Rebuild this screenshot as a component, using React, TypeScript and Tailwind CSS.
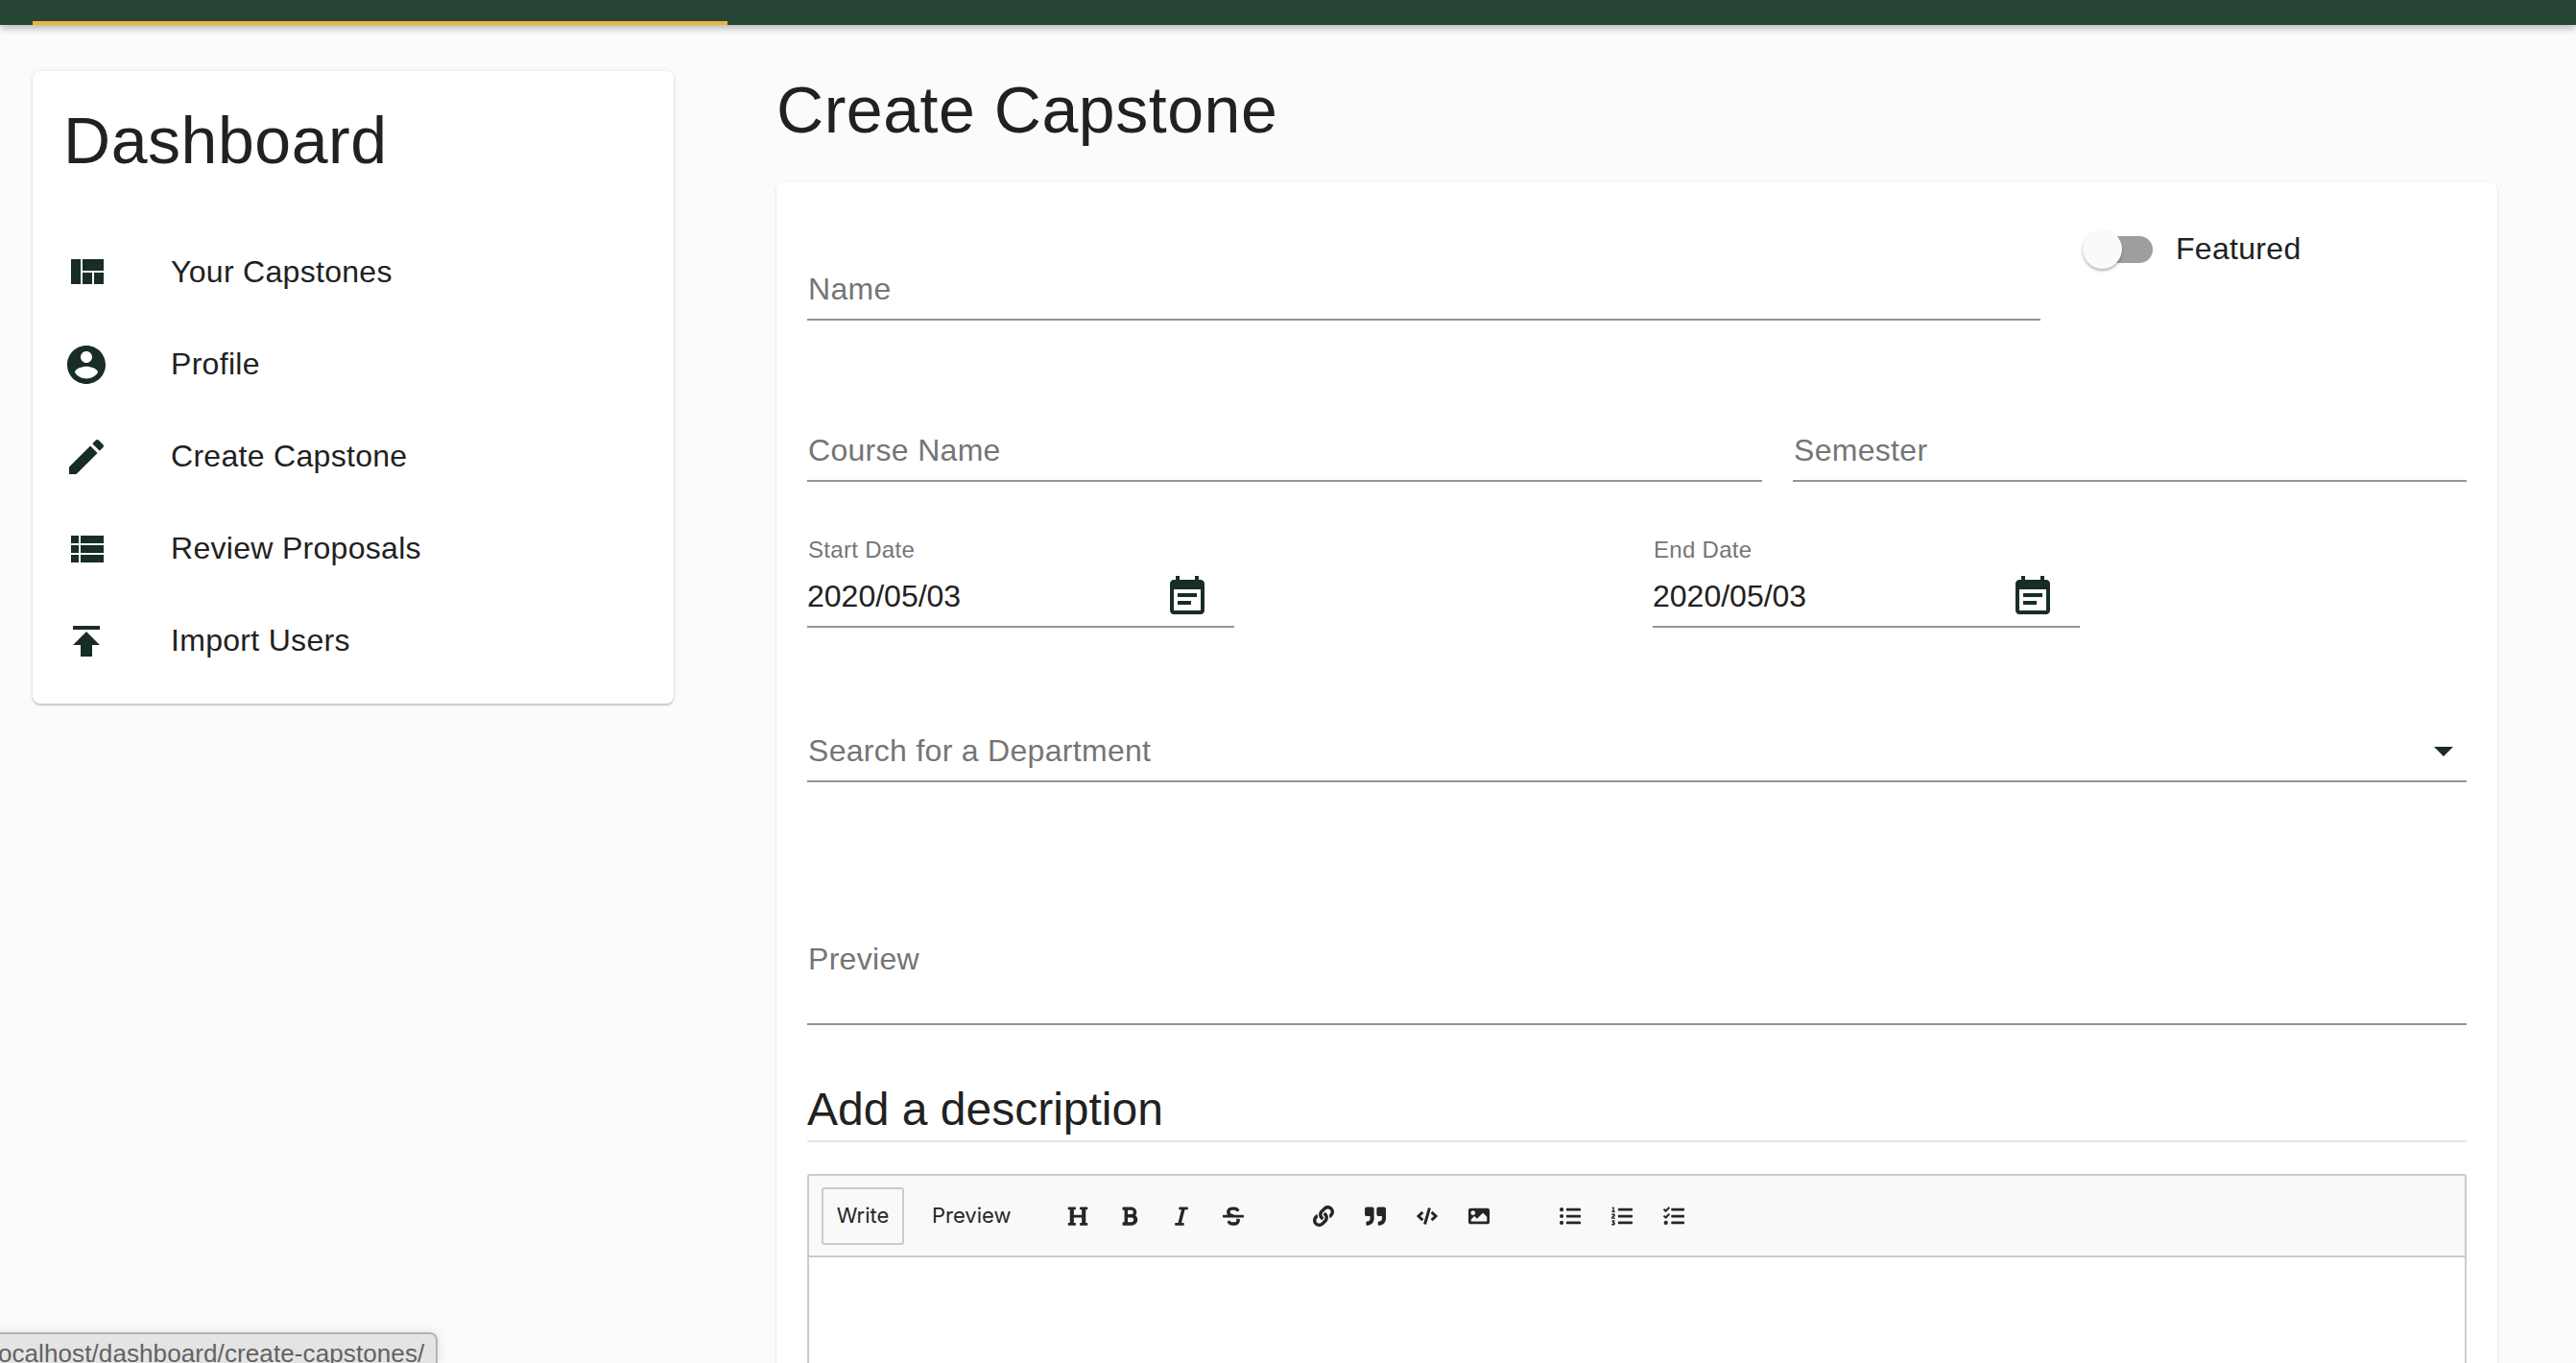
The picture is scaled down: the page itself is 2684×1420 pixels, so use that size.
import type { ReactNode } from "react"
import {
  FaBold,
  FaCode,
  FaHeading,
  FaImage,
  FaItalic,
  FaLink,
  FaListOl,
  FaListUl,
  FaQuoteRight,
  FaStrikethrough,
  FaTasks,
} from "react-icons/fa"

const navItems = [
  { label: "Your Capstones", path: "M10 18h5v-6h-5v6zm-6 0h5V5H4v13zm12 0h5v-6h-5v6zM10 5v6h11V5H10z" },
  {
    label: "Profile",
    path: "M12 2C6.48 2 2 6.48 2 12s4.48 10 10 10 10-4.48 10-10S17.52 2 12 2zm0 3c1.66 0 3 1.34 3 3s-1.34 3-3 3-3-1.34-3-3 1.34-3 3-3zm0 14.2c-2.5 0-4.71-1.28-6-3.22.03-1.99 4-3.08 6-3.08 1.99 0 5.97 1.09 6 3.08-1.29 1.94-3.5 3.22-6 3.22z",
  },
  {
    label: "Create Capstone",
    path: "M3 17.25V21h3.75L17.81 9.94l-3.75-3.75L3 17.25zM20.71 7.04c.39-.39.39-1.02 0-1.41l-2.34-2.34c-.39-.39-1.02-.39-1.41 0l-1.83 1.83 3.75 3.75 1.83-1.83z",
  },
  { label: "Review Proposals", path: "M4 14h4v-4H4v4zm0 5h4v-4H4v4zM4 9h4V5H4v4zm5 5h12v-4H9v4zm0 5h12v-4H9v4zM9 5v4h12V5H9z" },
  { label: "Import Users", path: "M5 4v2h14V4H5zm0 10h4v6h6v-6h4l-7-7-7 7z" },
]

const eventNote =
  "M17 10H7v2h10v-2zm2-7h-1V1h-2v2H8V1H6v2H5c-1.11 0-1.99.9-1.99 2L3 19c0 1.1.89 2 2 2h14c1.1 0 2-.9 2-2V5c0-1.1-.9-2-2-2zm0 16H5V8h14v11zm-5-5H7v2h7v-2z"

function MaterialIcon({ path }: { path: string }) {
  return (
    <svg viewBox="0 0 24 24" className="h-12 w-12 shrink-0 fill-[#182d25]">
      <path d={path} />
    </svg>
  )
}

function Field({ label, className, children }: { label: string; className?: string; children?: ReactNode }) {
  return (
    <div className={`flex h-16 items-end justify-between border-b-2 border-[#949494] pb-[12px] ${className ?? ""}`}>
      <span className="ml-[1px] text-[32px] leading-[38px] tracking-[0.3px] text-[#757575]">{label}</span>
      {children}
    </div>
  )
}

function DateField({ label, value }: { label: string; value: string }) {
  return (
    <div className="flex h-[99px] w-[445px] flex-col border-b-2 border-[#949494]">
      <span className="ml-[1px] text-[24px] leading-[36px] tracking-[0.3px] text-[#757575]">{label}</span>
      <div className="mt-[6px] flex items-center justify-between pr-[25px]">
        <span className="pb-[1px] text-[32px] leading-[48px] text-[#212121]">{value}</span>
        <MaterialIcon path={eventNote} />
      </div>
    </div>
  )
}

const toolGroups = [
  { gap: "ml-0", icons: [FaHeading, FaBold, FaItalic, FaStrikethrough] },
  { gap: "ml-[72px]", icons: [FaLink, FaQuoteRight, FaCode, FaImage] },
  { gap: "ml-[73px]", icons: [FaListUl, FaListOl, FaTasks] },
]

export default function App() {
  return (
    <div className="relative h-[1420px] overflow-hidden bg-[#fbfbfb] font-['Liberation_Sans',Arial,sans-serif] text-[#212121]">
      <header className="h-[26px] bg-[#264535] pl-[34px] shadow-[0_3px_8px_rgba(0,0,0,0.3)]">
        <div className="h-[26px] w-[724px] border-b-4 border-[#eeb33b]" />
      </header>

      <div className="flex items-start pl-[34px]">
        <aside className="mt-[48px] h-[659px] w-[668px] rounded-[8px] bg-white pl-[32px] shadow-[0_2px_2px_rgba(0,0,0,0.18),0_0_4px_rgba(0,0,0,0.1)]">
          <h2 className="pt-[32px] text-[68px] leading-[80px] tracking-[0.55px]">Dashboard</h2>
          <nav className="mt-[50px] flex flex-col">
            {navItems.map((item) => (
              <div key={item.label} className="flex h-[96px] items-center">
                <MaterialIcon path={item.path} />
                <span className="ml-[64px] pb-[2px] text-[32px] leading-[48px] tracking-[0.3px]">{item.label}</span>
              </div>
            ))}
          </nav>
        </aside>

        <main className="ml-[107px] w-[1793px]">
          <h1 className="mt-[48px] text-[68px] leading-[80px] tracking-[0.55px]">Create Capstone</h1>
          <section className="mt-[36px] h-[1300px] rounded-[8px] bg-white px-[32px] shadow-[0_1px_3px_rgba(0,0,0,0.16)]">
            <div className="flex items-start pt-[49px]">
              <Field label="Name" className="mt-[31px] w-[1285px]" />
              <div className="relative ml-[44px] h-[41px] w-[73px]">
                <div className="absolute left-[6px] top-[7px] h-[28px] w-[67px] rounded-full bg-[#9e9e9e]" />
                <div className="absolute left-0 top-0 h-[41px] w-[41px] rounded-full bg-[#fafafa] shadow-[0_2px_3px_rgba(0,0,0,0.3)]" />
              </div>
              <span className="ml-[24px] text-[32px] leading-[41px] tracking-[0.3px]">Featured</span>
            </div>

            <div className="mt-[104px] flex gap-[32px]">
              <Field label="Course Name" className="w-[995px]" />
              <Field label="Semester" className="flex-1" />
            </div>

            <div className="mt-[53px] flex gap-[436px]">
              <DateField label="Start Date" value="2020/05/03" />
              <DateField label="End Date" value="2020/05/03" />
            </div>

            <Field label="Search for a Department" className="relative mt-[97px]">
              <svg viewBox="0 0 24 24" className="absolute right-0 top-[7px] h-12 w-12 fill-[#182d25]">
                <path d="M7 10l5 5 5-5z" />
              </svg>
            </Field>

            <div className="mt-[165px] h-[88px] border-b-2 border-[#949494]">
              <span className="ml-[1px] text-[32px] leading-[38px] tracking-[0.3px] text-[#757575]">Preview</span>
            </div>

            <h3 className="mt-[55px] border-b-2 border-[#e4e4e4] text-[48px] leading-[65px]">Add a description</h3>

            <div className="mt-[33px] h-[400px] rounded-[3px] border-2 border-[#c8ccd0]">
              <div className="flex h-[85px] items-center border-b-2 border-[#c8ccd0] bg-[#f9f9f9] pl-[13px]">
                <button className="flex h-[60px] w-[86px] items-center justify-center rounded-[3px] border-2 border-[#c8ccd0] font-['Inter',sans-serif] text-[22px] text-[#242729]">
                  Write
                </button>
                <span className="ml-[29px] w-[82px] font-['Inter',sans-serif] text-[22px] text-[#242729]">Preview</span>
                <div className="ml-[59px] flex items-center">
                  {toolGroups.map((group, i) => (
                    <div key={i} className={`flex items-center gap-[32px] ${group.gap}`}>
                      {group.icons.map((Icon, j) => (
                        <Icon key={j} className="h-[22px] w-[22px] text-[#242729]" />
                      ))}
                    </div>
                  ))}
                </div>
              </div>
            </div>
          </section>
        </main>
      </div>

      <div className="absolute bottom-0 left-0 h-[32px] w-[456px] overflow-hidden rounded-tr-[8px] border-r-2 border-t-2 border-[#b4b4b4] bg-[#e4e4e4] text-[26px] leading-[40px] tracking-[0.1px] text-[#626262] shadow-[0_0_12px_rgba(0,0,0,0.12)]">
        <span className="ml-[-8px] block whitespace-nowrap">localhost/dashboard/create-capstones/</span>
      </div>
    </div>
  )
}
